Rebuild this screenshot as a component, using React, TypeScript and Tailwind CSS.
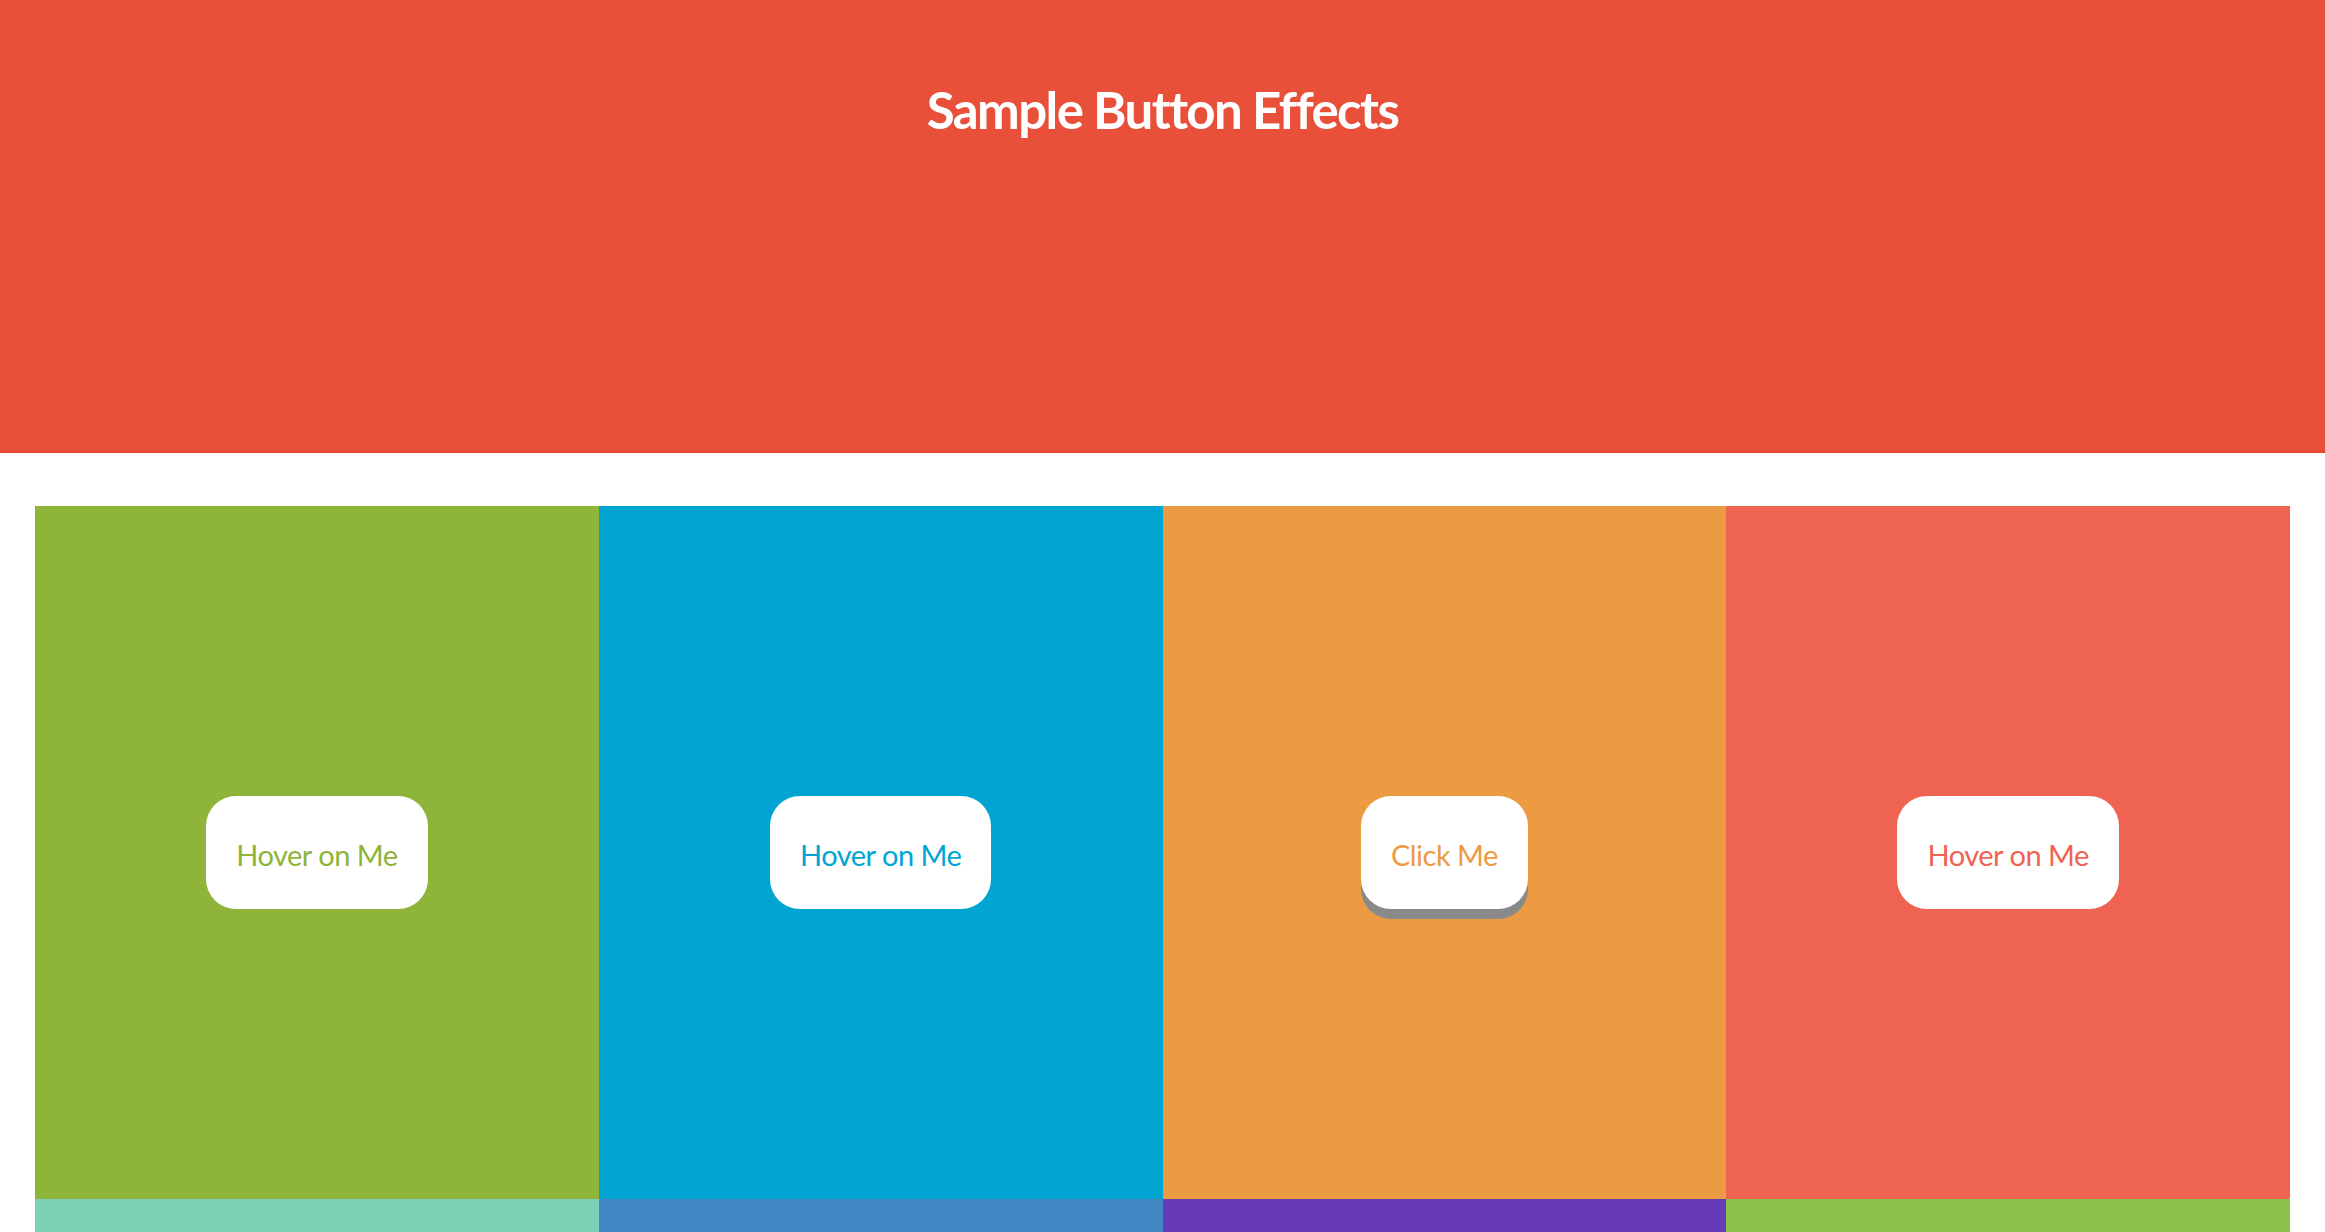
const tiles = [
  { bg: 'bg-[#8eb43a]', text: 'text-[#8eb43a]', label: 'Hover on Me', shadow: '' },
  { bg: 'bg-[#02a5d1]', text: 'text-[#02a5d1]', label: 'Hover on Me', shadow: '' },
  { bg: 'bg-[#ec9b42]', text: 'text-[#ec9b42]', label: 'Click Me', shadow: 'shadow-[0_10px_0_#8a8a8a]' },
  { bg: 'bg-[#ef6352]', text: 'text-[#ef6352]', label: 'Hover on Me', shadow: '' },
];

const lower = [
  { bg: 'bg-[#7dd0b6]', text: 'text-[#7dd0b6]', label: 'Hover on Me' },
  { bg: 'bg-[#4287c3]', text: 'text-[#4287c3]', label: 'Hover on Me' },
  { bg: 'bg-[#673ab7]', text: 'text-[#673ab7]', label: 'Click Me' },
  { bg: 'bg-[#8bc34a]', text: 'text-[#8bc34a]', label: 'Hover on Me' },
];

export default function App() {
  return (
    <div className="min-h-screen bg-white font-['Lato','Open_Sans',sans-serif]">
      <header className="h-[453px] bg-[#e9503a] border-b-2 border-[#e4462f] flex justify-center pt-[80px]">
        <h1 className="text-white font-bold text-[51px] leading-[60px] tracking-[-1.6px]">
          Sample Button Effects
        </h1>
      </header>
      <div className="px-[35px] mt-[53px] grid grid-cols-4">
        {tiles.map((t, i) => (
          <div key={i} className={`${t.bg} h-[693px] flex items-center justify-center`}>
            <button
              className={`bg-white ${t.text} ${t.shadow} h-[113px] px-[30px] rounded-[30px] text-[29px] tracking-[-0.5px] leading-none pt-[4px]`}
            >
              {t.label}
            </button>
          </div>
        ))}
        {lower.map((t, i) => (
          <div key={i} className={`${t.bg} h-[693px] flex items-center justify-center`}>
            <button className={`bg-white ${t.text} h-[113px] px-[30px] rounded-[30px] text-[29px] tracking-[-0.5px] leading-none pt-[4px]`}>
              {t.label}
            </button>
          </div>
        ))}
      </div>
    </div>
  );
}
